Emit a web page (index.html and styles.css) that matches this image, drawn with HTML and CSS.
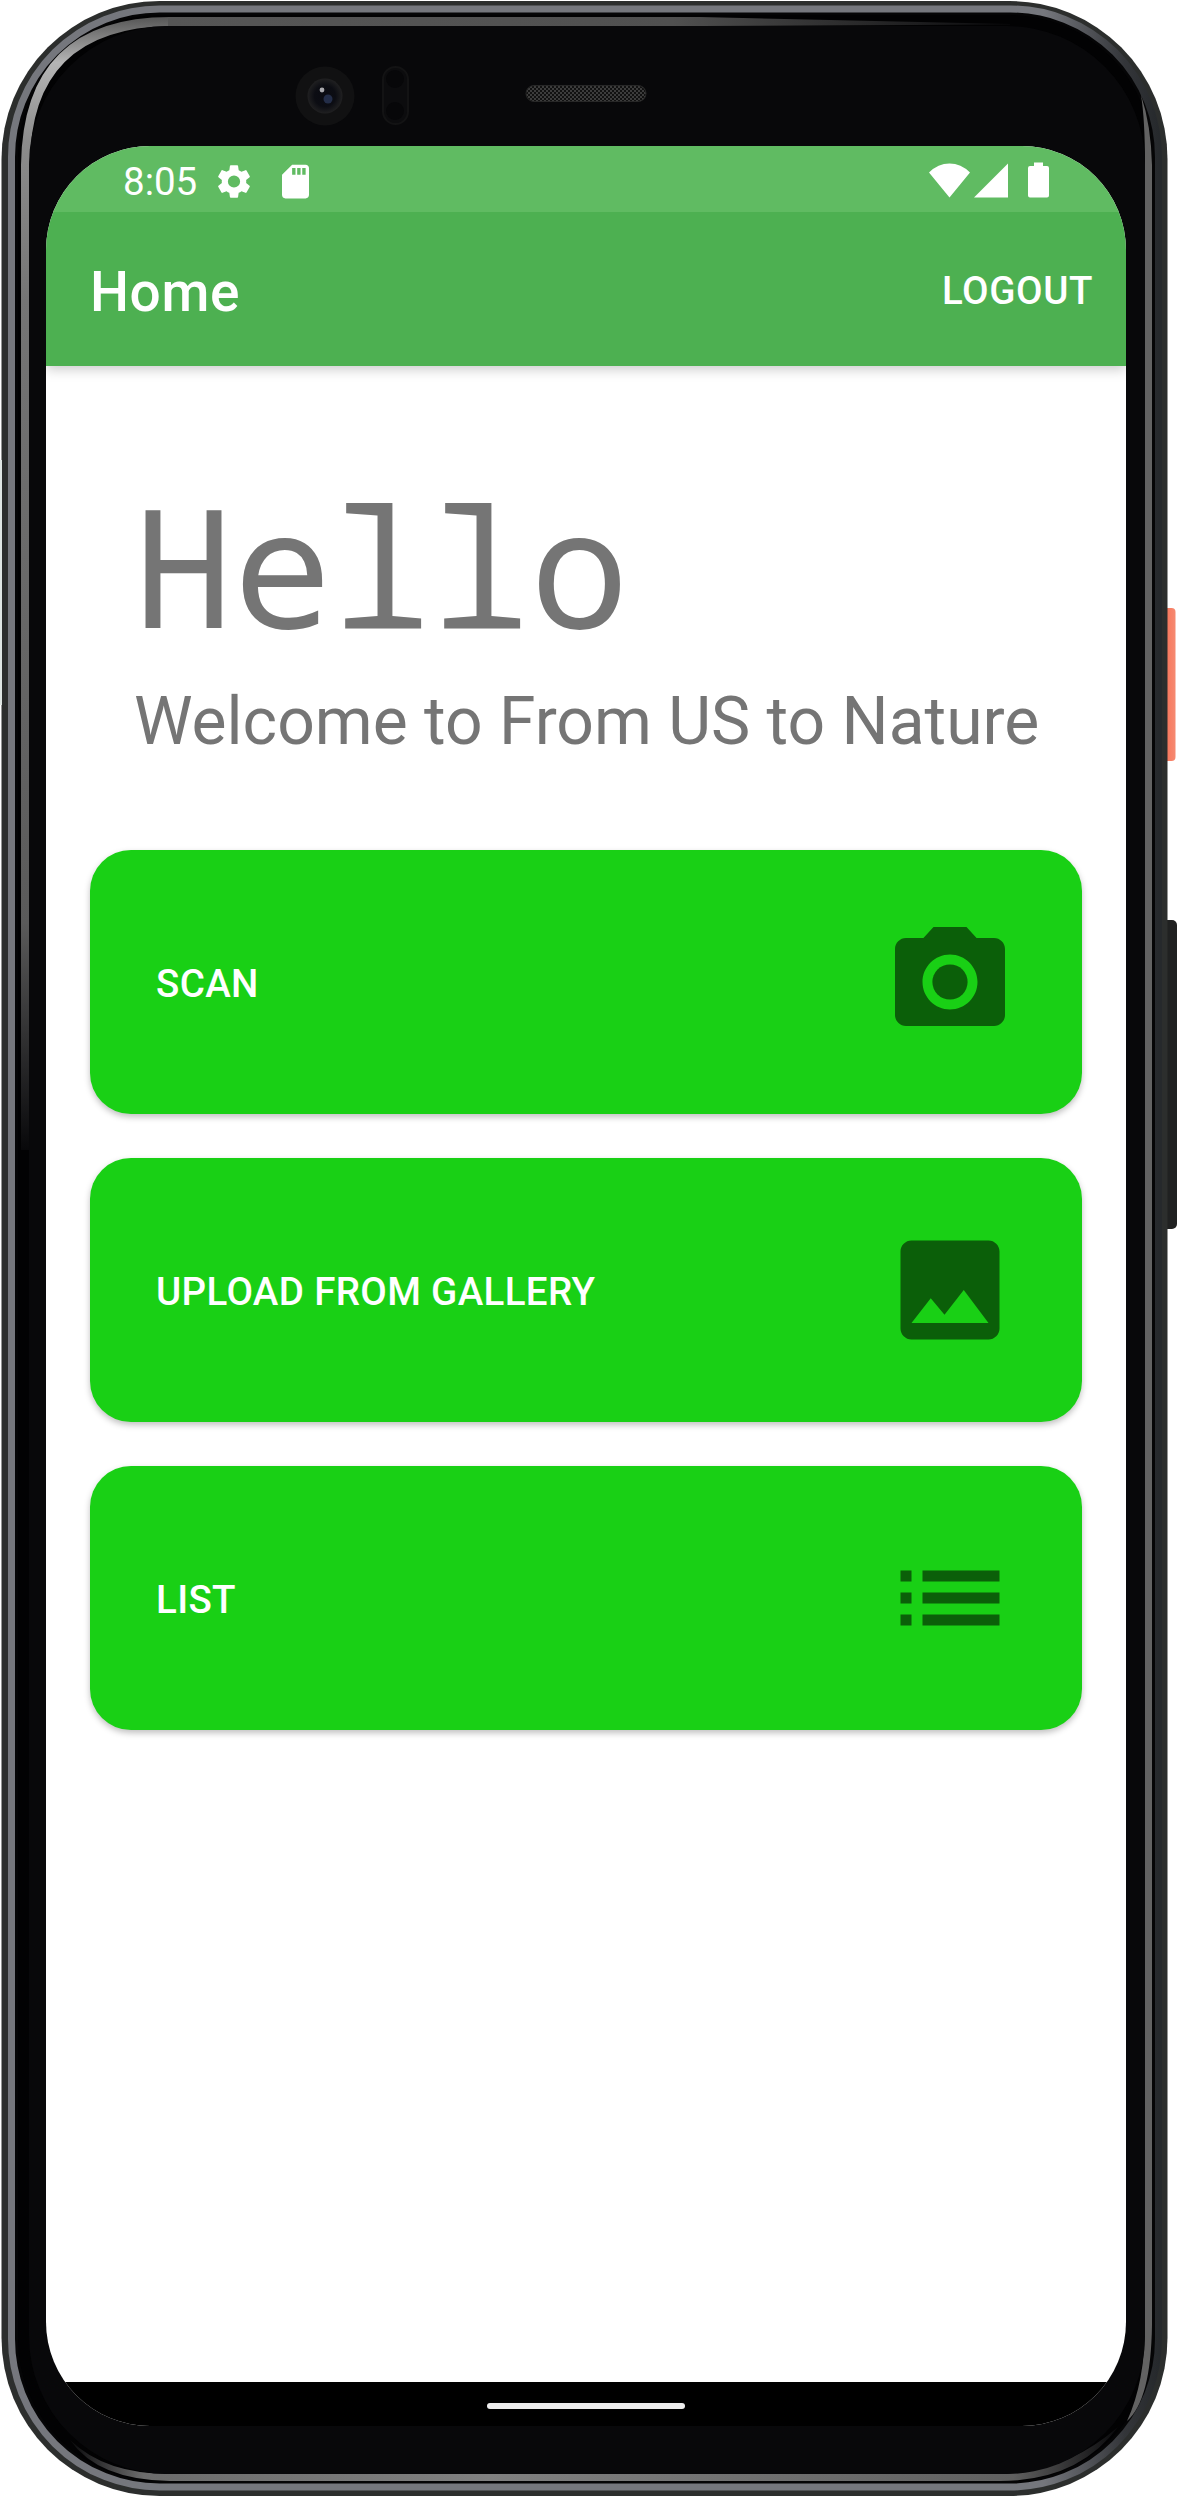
FILE: index.html
```html
<!DOCTYPE html>
<html lang="en">
<head>
<meta charset="utf-8">
<title>Home</title>
<link rel="stylesheet" href="styles.css">
</head>
<body>
<div class="phone">
  <svg class="bezel" viewBox="0 0 1178 2498" aria-hidden="true">
    <defs>
      <linearGradient id="key" x1="0" x2="1"><stop offset="0" stop-color="#e2563a"/><stop offset=".35" stop-color="#f9755a"/><stop offset="1" stop-color="#f58a72"/></linearGradient>
      <linearGradient id="rim" x1="0" x2="1"><stop offset="0" stop-color="#75777d"/><stop offset=".9" stop-color="#75777d"/><stop offset=".97" stop-color="#34363a"/><stop offset="1" stop-color="#26292c"/></linearGradient>
      <linearGradient id="left" x1="0" y1="0" x2="0" y2="1"><stop offset="0" stop-color="#565656"/><stop offset=".04" stop-color="#b5b5b5"/><stop offset=".11" stop-color="#8c8c8c"/><stop offset=".25" stop-color="#757575"/><stop offset=".8" stop-color="#5a5a5a"/><stop offset="1" stop-color="#08080a"/></linearGradient>
      <linearGradient id="top" x1="0" x2="1"><stop offset="0" stop-color="#565656"/><stop offset=".6" stop-color="#505050"/><stop offset="1" stop-color="#0a0a0c"/></linearGradient>
      <linearGradient id="foot" x1="0" x2="1"><stop offset="0" stop-color="#0a0a0c"/><stop offset=".07" stop-color="#6c6c6c"/><stop offset=".4" stop-color="#808080"/><stop offset=".9" stop-color="#606060"/><stop offset="1" stop-color="#0a0a0c"/></linearGradient>
      <pattern id="mesh" width="4" height="4" patternUnits="userSpaceOnUse"><path fill="#111" d="M0 0h4v4H0z"/><path fill="#3c3c3c" d="M0 0h2v2H0zM2 2h2v2H2z"/></pattern>
      <radialGradient id="lens"><stop offset="0" stop-color="#0a0b12"/><stop offset=".6" stop-color="#0c0d13"/><stop offset="1" stop-color="#202021"/></radialGradient>
    </defs>
    <rect x="1160" y="608" width="15.500" height="153" rx="4" fill="url(#key)"/>
    <rect x="1160" y="920" width="17" height="309" rx="5" fill="#202121"/>
    <rect x="1.500" y="1" width="1166" height="2495" rx="158" fill="#2c2e2d"/>
    <path d="M1 460V705" stroke="#dfe6e3" stroke-width="2"/>
    <rect x="11.500" y="9" width="1147" height="2478" rx="148" fill="#050506" stroke="url(#rim)" stroke-width="7"/>
    <rect x="18" y="15" width="1134" height="2466" rx="142" fill="#020203"/>
    <path d="M21 1150V165Q23 17 170 17V26Q30 28 30 165V1150Z" fill="url(#left)"/>
    <path d="M168 17H700L1010 24V24.500L700 26H168Z" fill="url(#top)"/>
    <path d="M1141 95Q1151 125 1152 165V2325Q1151 2400 1127 2421Q1145 2382 1145 2325V165Q1145 120 1141 95Z" fill="#626262"/>
    <path d="M70 2440Q105 2474 170 2474H1000Q1065 2473 1118 2427Q1078 2481 1000 2481H170Q98 2480 70 2440Z" fill="url(#foot)"/>
    <rect x="29" y="26" width="1116" height="2448" rx="138" fill="#08080a"/>
    <circle cx="325" cy="96" r="29.500" fill="#111112"/>
    <circle cx="325" cy="96" r="17.500" fill="url(#lens)"/>
    <circle cx="328" cy="99" r="4.500" fill="#232d48"/><circle cx="322" cy="90" r="2.400" fill="#a9a9ad"/>
    <rect x="383" y="67" width="25" height="57" rx="12.500" fill="#0c0c0e" stroke="#131314" stroke-width="2"/>
    <circle cx="395" cy="79" r="9" fill="#070709"/><circle cx="395" cy="111" r="9" fill="#070709"/>
    <rect x="526" y="85.500" width="120" height="16" rx="8" fill="url(#mesh)" stroke="#272727"/>
  </svg>
  <main class="screen">
    <div class="status">
      <span class="clock">8:05</span>
      <svg class="gear" viewBox="2 2 20 20"><path d="M19.140 12.940c.04-.3.060-.61.060-.94 0-.32-.02-.64-.07-.94l2.030-1.580a.49.490 0 0 0 .12-.61l-1.920-3.320a.488.488 0 0 0-.59-.22l-2.390.96c-.5-.38-1.030-.7-1.620-.94l-.36-2.540a.484.484 0 0 0-.48-.41h-3.840c-.24 0-.43.170-.47.410l-.36 2.540c-.59.240-1.130.57-1.620.94l-2.390-.96c-.22-.08-.47 0-.59.220L2.740 8.870c-.12.210-.08.470.12.610l2.030 1.580c-.05.300-.09.630-.09.940s.02.640.070.940l-2.030 1.580a.49.490 0 0 0-.12.610l1.920 3.320c.12.220.37.290.59.220l2.390-.96c.5.380 1.030.7 1.620.94l.36 2.540c.05.240.24.410.48.410h3.840c.24 0 .44-.17.470-.41l.36-2.540c.59-.24 1.130-.56 1.620-.94l2.390.96c.22.080.47 0 .59-.22l1.920-3.320c.12-.22.070-.47-.12-.61l-2.010-1.580zM12 15.600A3.600 3.600 0 1 1 12 8.400a3.600 3.600 0 0 1 0 7.200z"/></svg>
      <svg class="sd" viewBox="4 2 16 20"><path d="M18 2h-8L4.020 8 4 20c0 1.100.9 2 2 2h12c1.100 0 2-.9 2-2V4c0-1.100-.9-2-2-2zm-6 6h-2V4h2v4zm3 0h-2V4h2v4zm3 0h-2V4h2v4z"/></svg>
      <svg class="signals" viewBox="0 0 120 36"><path d="M0 10.500Q9 1.500 20.500 1.500T41 10.500L20.500 35.500zM45 35.500L79 1.500V35.500zM101 4h4V0.500h9V4h4q2 0 2 2v27.500q0 2-2 2h-17q-2 0-2-2V6q0-2 2-2z"/></svg>
    </div>
    <header class="appbar"><h1>Home</h1><button class="logout">LOGOUT</button></header>
    <section class="content">
      <div class="hello">Hello</div>
      <p class="welcome">Welcome to From US to Nature</p>
      <button class="card"><span>SCAN</span><svg viewBox="0 0 24 24"><circle cx="12" cy="12" r="3.200"/><path d="M9 2L7.170 4H4c-1.100 0-2 .9-2 2v12c0 1.100.9 2 2 2h16c1.100 0 2-.9 2-2V6c0-1.100-.9-2-2-2h-3.170L15 2H9zm3 15c-2.760 0-5-2.240-5-5s2.240-5 5-5 5 2.240 5 5-2.240 5-5 5z"/></svg></button>
      <button class="card"><span>UPLOAD FROM GALLERY</span><svg viewBox="0 0 24 24"><path d="M21 19V5c0-1.100-.9-2-2-2H5c-1.100 0-2 .9-2 2v14c0 1.100.9 2 2 2h14c1.100 0 2-.9 2-2zM8.500 13.500l2.500 3.010L14.500 12l4.500 6H5l3.500-4.500z"/></svg></button>
      <button class="card"><span>LIST</span><svg viewBox="0 0 24 24"><path d="M3 13h2v-2H3v2zm0 4h2v-2H3v2zm0-8h2V7H3v2zm4 4h14v-2H7v2zm0 4h14v-2H7v2zM7 7v2h14V7H7z"/></svg></button>
    </section>
    <nav class="navbar"><span class="handle"></span></nav>
  </main>
</div>
</body>
</html>
```
FILE: styles.css
```css
* { box-sizing: border-box; }
body { margin: 0; background: #fff; font-family: Roboto, sans-serif; }
button { border: 0; font: inherit; color: inherit; background: none; }
.phone { position: relative; width: 1178px; height: 2498px; padding: 146px 52px 72px 46px; }
.bezel { position: absolute; inset: 0; width: 1178px; height: 2498px; }
.screen { position: relative; display: flex; flex-direction: column; height: 2280px; border-radius: 104px; overflow: hidden; background: #fff; }
.status { position: relative; z-index: 1; display: flex; align-items: center; height: 66px; padding: 4px 77px 0 77px; background: #60bb62; color: #fff; fill: #fff; }
.clock { width: 94px; margin-top: 2px; font-size: 38.500px; line-height: 62px; }
.gear { width: 34px; height: 35px; }
.sd { width: 27px; height: 35px; margin-left: 31px; }
.signals { width: 120px; height: 36px; margin-left: auto; margin-top: -2px; }
.appbar { position: relative; display: flex; align-items: center; justify-content: space-between; height: 154px; padding: 0 33px 0 44px; background: #4db051; color: #fff; box-shadow: 0 3px 12px rgba(0,0,0,.22); }
.appbar h1 { margin: 6px 0 0; font-size: 55px; font-weight: 500; letter-spacing: .6px; }
.logout { padding: 2px 0 0; font-size: 38.500px; font-weight: 500; letter-spacing: .6px; }
.content { flex: 1; display: flex; flex-direction: column; padding: 102px 44px 0; }
.hello { height: 193px; padding-left: 44px; font: 165px/193px "Droid Sans Mono", "Noto Sans Mono", "Liberation Mono", monospace; color: #757575; }
.welcome { margin: 22px 0 89px; padding-left: 44px; height: 78px; font-size: 66px; line-height: 78px; color: #757575; white-space: nowrap; }
.card { display: flex; align-items: center; justify-content: space-between; height: 264px; margin-bottom: 44px; padding: 0 66px; border-radius: 41px; background: #19d015; color: #fff; font-size: 38.500px; font-weight: 500; letter-spacing: .35px; box-shadow: 0 3px 6px rgba(0,0,0,.25); }
.card span { padding-top: 2px; }
.card svg { width: 132px; height: 132px; fill: #0b5f09; }
.navbar { display: flex; justify-content: center; align-items: center; height: 44px; padding-top: 4px; background: #000; }
.handle { width: 198px; height: 6px; border-radius: 3px; background: #eee; }
```
